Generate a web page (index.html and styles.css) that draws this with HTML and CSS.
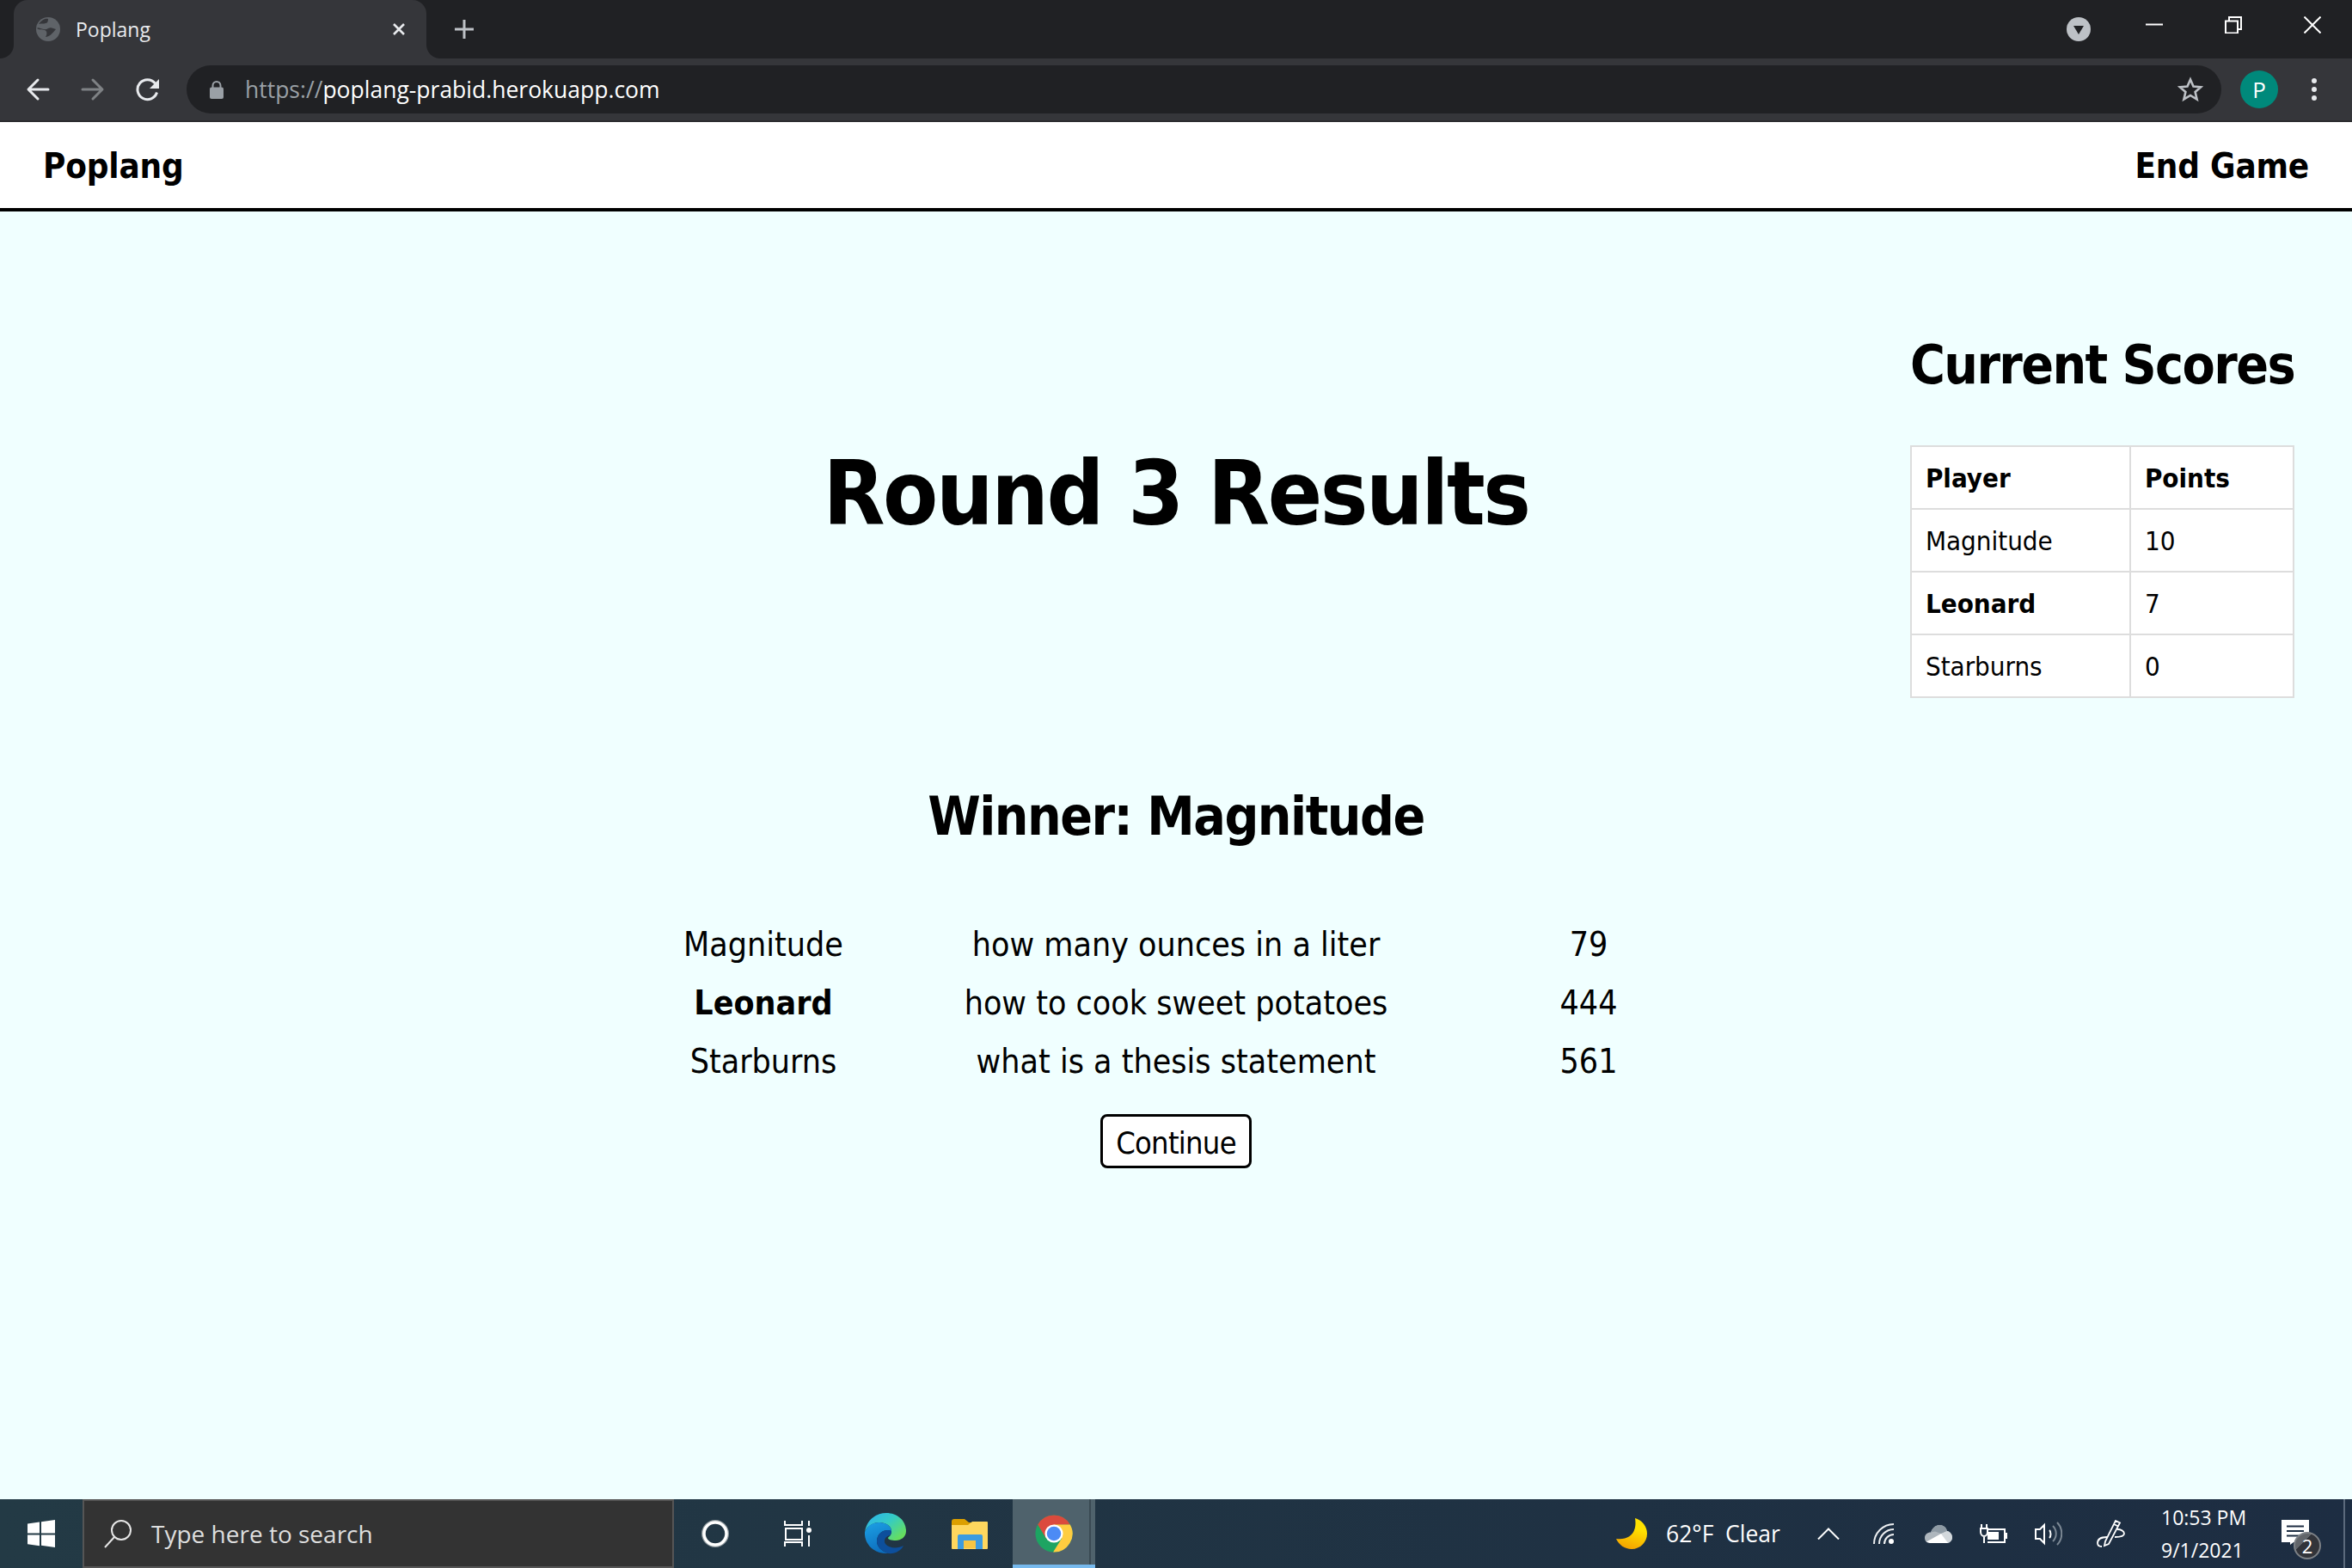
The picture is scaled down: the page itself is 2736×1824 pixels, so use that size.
FILE: index.html
```html
<!DOCTYPE html>
<html lang="en">
<head>
<meta charset="utf-8">
<title>Poplang</title>
<link rel="stylesheet" href="styles.css">
</head>
<body>
<div class="window">
  <div class="tabstrip">
    <div class="tab">
      <svg class="favicon" viewBox="0 0 28 28"><circle cx="14" cy="14" r="14" fill="#5f6368"/><path d="M3 8c3-1 6 0 8-1 2 0 3-2 3-5-4-1-8 2-11 6zM1 13c2 2 6 1 9 2 3 1 3 5 1 8 4 0 8-4 12-9-3-1-6-3-9-1-3 2-6 1-9 0-2-1-3-1-4 0z" fill="#35363a"/></svg>
      <span class="tab-title">Poplang</span>
      <svg class="tab-close" viewBox="0 0 16 16"><path d="M2 2l12 12M14 2L2 14" stroke="#e8eaed" stroke-width="2.600" fill="none"/></svg>
    </div>
    <svg class="newtab" viewBox="0 0 24 24"><path d="M12 1v22M1 12h22" stroke="#bdc1c6" stroke-width="3" fill="none"/></svg>
    <svg class="profile-menu" viewBox="0 0 28 28"><circle cx="14" cy="14" r="14" fill="#bdc1c6"/><path d="M8 10h12l-6 10z" fill="#202124"/></svg>
    <div class="winbtn"><svg viewBox="0 0 20 20"><path d="M0 9.500h20" stroke="#fff" stroke-width="2" fill="none"/></svg></div>
    <div class="winbtn"><svg viewBox="0 0 20 20"><path d="M1 5.500h14v14H1zM5 5V1h14v14h-4" stroke="#fff" stroke-width="2" fill="none"/></svg></div>
    <div class="winbtn"><svg viewBox="0 0 20 20"><path d="M.5.5l19 19M19.500.5l-19 19" stroke="#fff" stroke-width="2" fill="none"/></svg></div>
  </div>
  <div class="toolbar">
    <div class="toolbtn"><svg viewBox="0 0 28 28"><path d="M26 14H4M14 3L3 14l11 11" stroke="#e8eaed" stroke-width="3" stroke-linecap="round" stroke-linejoin="round" fill="none"/></svg></div>
    <div class="toolbtn"><svg viewBox="0 0 28 28"><path d="M2 14h22M14 3l11 11-11 11" stroke="#7f8285" stroke-width="3" stroke-linecap="round" stroke-linejoin="round" fill="none"/></svg></div>
    <div class="toolbtn"><svg viewBox="0 0 28 28"><path d="M24.500 17.500a11.500 11.500 0 1 1-2-10.500" stroke="#e8eaed" stroke-width="3" fill="none"/><path d="M27 2v11H16z" fill="#e8eaed"/></svg></div>
    <div class="omnibox">
      <svg class="lock" viewBox="0 0 16 21"><path d="M3.500 9V5.500a4.500 4.500 0 0 1 9 0V9" stroke="#9aa0a6" stroke-width="2" fill="none"/><rect y="7.500" width="16" height="13.500" rx="2" fill="#9aa0a6"/></svg>
      <span class="url"><span class="url-scheme">https://</span>poplang-prabid.herokuapp.com</span>
      <svg class="star" viewBox="0 0 30 30"><path d="M15 3.500l3.500 8 8.700.800-6.600 5.700 2 8.500-7.600-4.500-7.600 4.500 2-8.500-6.600-5.700 8.700-.8z" stroke="#bdc1c6" stroke-width="2.600" fill="none"/></svg>
    </div>
    <div class="avatar">P</div>
    <div class="dots"><i></i><i></i><i></i></div>
  </div>
  <nav class="sitenav">
    <span class="brand">Poplang</span>
    <span class="brand">End Game</span>
  </nav>
  <main class="page">
    <div class="center">
      <h1 class="round-title">Round 3 Results</h1>
      <h2 class="winner">Winner: Magnitude</h2>
      <div class="results">
        <div>Magnitude</div><div>how many ounces in a liter</div><div>79</div>
        <div class="me">Leonard</div><div>how to cook sweet potatoes</div><div>444</div>
        <div>Starburns</div><div>what is a thesis statement</div><div>561</div>
      </div>
      <button class="continue" type="button">Continue</button>
    </div>
    <aside class="scores">
      <h2 class="scores-title">Current Scores</h2>
      <table class="score-table">
        <tr><th>Player</th><th>Points</th></tr>
        <tr><td>Magnitude</td><td>10</td></tr>
        <tr><td class="me">Leonard</td><td>7</td></tr>
        <tr><td>Starburns</td><td>0</td></tr>
      </table>
    </aside>
  </main>
  <footer class="taskbar">
    <div class="start"><svg viewBox="0 0 32 32"><path d="M0 4.500l14-2v13H0zM16 2.200L32 0v15.500H16zM0 17.500h14v12.800l-14-2zM16 17.500h16V32l-16-2.200z" fill="#fff"/></svg></div>
    <div class="search">
      <svg class="glass" viewBox="0 0 34 34"><circle cx="21" cy="13" r="11" stroke="#e6e6e6" stroke-width="2" fill="none"/><path d="M13 21L2 33" stroke="#e6e6e6" stroke-width="2" fill="none"/></svg>
      <span class="search-text">Type here to search</span>
    </div>
    <div class="tb-btn"><svg class="ic32" viewBox="0 0 32 32"><circle cx="16" cy="16" r="15" stroke="#8d979c" stroke-width="2" fill="none"/><circle cx="16" cy="16" r="13" stroke="#fff" stroke-width="3.500" fill="none"/></svg></div>
    <div class="tb-btn"><svg class="ic32" viewBox="0 0 32 32"><path d="M1 1v5h20V1M1 31v-5h20v5M29 1v6M29 18v13" stroke="#fff" stroke-width="2" fill="none"/><rect x="2" y="10" width="19" height="13" stroke="#fff" stroke-width="2" fill="none"/><circle cx="29" cy="12" r="3" fill="#fff"/></svg></div>
    <div class="tb-btn wide">
      <svg class="ic48" viewBox="0 0 48 48">
        <defs>
          <linearGradient id="edgeA" x1="0.100" y1="0" x2="1" y2="0.700"><stop offset="0" stop-color="#2cb4ec"/><stop offset="0.500" stop-color="#35cbc4"/><stop offset="1" stop-color="#66de5e"/></linearGradient>
          <linearGradient id="edgeB" x1="0.300" y1="0" x2="0.600" y2="1"><stop offset="0" stop-color="#1b9de2"/><stop offset="1" stop-color="#0c6cbc"/></linearGradient>
        </defs>
        <path d="M0 22C2 9 12 0 25 0c13 0 23 9 23 21 0 7-6 11-12 11-5 0-9-1-9-3 0-1 4-2 4-8 0-6-7-10-14-10C9 11 2 16 0 22z" fill="url(#edgeA)"/>
        <path d="M0 22c3-7 9-11 17-11 7 0 14 4 14 10-6-3-17 1-17 12 0 6 5 11 13 14C12 48-1 37 0 22z" fill="url(#edgeB)"/>
        <path d="M31 21c-6-3-17 1-17 12 0 6 5 11 13 14 8 1 15-3 18-9-7 4-17 3-21-2-3-5 1-9 5-10 1-1 2-2 2-5z" fill="#0d4f9c"/>
      </svg>
    </div>
    <div class="tb-btn mid">
      <svg class="ic42" viewBox="0 0 42 35"><path d="M0 3a3 3 0 0 1 3-3h12l5 4h21a1 1 0 0 1 1 1v4H0z" fill="#dc9f00"/><path d="M0 7h19l5-4h17a1 1 0 0 1 1 1v30a1 1 0 0 1-1 1H1a1 1 0 0 1-1-1z" fill="#ffd75e"/><path d="M7 35V20a2 2 0 0 1 2-2h25a2 2 0 0 1 2 2v15h-8v-10H14v10z" fill="#3d9be0"/><rect x="14" y="25" width="14" height="9" fill="#f6c544"/></svg>
    </div>
    <div class="tb-btn active">
      <svg class="ic44" viewBox="0 0 48 48"><circle cx="24" cy="24" r="23.500" fill="#1da462"/><path d="M44.500 12.500A23.500 23.500 0 0 0 3.500 12.500L14 30l10-17z" fill="#db4a3d"/><path d="M44.500 12.500H24l10 17.500L23 47.500A23.500 23.500 0 0 0 44.500 12.500z" fill="#ffcd40"/><circle cx="24" cy="24" r="11.500" fill="#fff"/><circle cx="24" cy="24" r="9" fill="#4c8bf5"/></svg>
    </div>
    <div class="tray">
      <svg class="moon" viewBox="0 0 36 36"><defs><linearGradient id="moonG" x1="0.500" y1="0.300" x2="0.300" y2="1"><stop offset="0" stop-color="#ffe100"/><stop offset="1" stop-color="#f4a000"/></linearGradient></defs><path d="M22 0c9 3 14 10 14 18 0 10-8 18-18 18-8 0-15-5-18-12 14 2 25-6 22-24z" fill="url(#moonG)"/></svg>
      <span class="weather">62°F&nbsp; Clear</span>
      <div class="slot first"><svg class="ic-chev" viewBox="0 0 26 14"><path d="M1 13.500L13 1.500l12 12" stroke="#fff" stroke-width="2" fill="none"/></svg></div>
      <div class="slot"><svg class="ic-wifi" viewBox="0 0 24 24"><path d="M1 24A23 23 0 0 1 24 1M7 24A17 17 0 0 1 24 7M13 24A11 11 0 0 1 24 13" stroke="#eef0f2" stroke-width="2" fill="none"/><circle cx="21" cy="21" r="3" fill="#fff"/></svg></div>
      <div class="slot"><svg class="ic-cloud" viewBox="0 0 32 21"><path d="M6 21C2 21 0 18 0 15c0-4 3-6.500 7-6.500C9 3 13 0 17 0c5 0 8 3 9 7 3 .5 6 3.500 6 7.500 0 3.500-3 6.500-6 6.500z" fill="#aeb6bd"/><path d="M7 8.500C9 3 13 0 17 0c5 0 8 3 9 7l-7 3-7-2.500z" fill="#8e9aa4"/><path d="M19 10l7-3c3 .5 6 3.500 6 7.500 0 3.500-3 6.500-6 6.500z" fill="#d3d8dc"/><path d="M2 19.500L19 10l8 11H6z" fill="#fff"/></svg></div>
      <div class="slot"><svg class="ic-batt" viewBox="0 0 32 22"><path d="M2 0v5M8 0v5M0 5h10M1 5v4c0 3 2 5 4 5s4-2 4-5V5M5 14v8" stroke="#fff" stroke-width="2" fill="none"/><path d="M10 6h19v15H9" stroke="#fff" stroke-width="2" fill="none"/><rect x="9" y="9" width="13" height="9" fill="#fff"/><rect x="30" y="10" width="2" height="7" fill="#fff"/></svg></div>
      <div class="slot"><svg class="ic-vol" viewBox="0 0 32 28"><path d="M1 9h5l5-5v21l-5-5H1z" stroke="#fff" stroke-width="2" fill="none"/><path d="M17 10c2 2 2 7 0 9" stroke="#fff" stroke-width="2" fill="none"/><path d="M21 5c5 5 5 13 0 18M26 1c7 7 7 19 0 26" stroke="#7c8894" stroke-width="2" fill="none"/></svg></div>
      <div class="slot pen"><svg class="ic-pen" viewBox="0 0 33 32"><path d="M22 1l5 2.500L14 28l-5 2 1-5zM20 5l5 2.500" stroke="#fff" stroke-width="1.800" fill="none"/><path d="M12 20C6 20 1 22 1 27c0 3 2 4 5 4M24 11c4 0 8 2 8 5s-5 4-11 4" stroke="#fff" stroke-width="1.800" fill="none"/></svg></div>
      <div class="clock"><span>10:53 PM</span><span>9/1/2021</span></div>
      <div class="notify">
        <svg class="note" viewBox="0 0 32 29"><path d="M0 0h32v26H14l-4 3v-3H0z" fill="#fff"/><path d="M6 7.500h20M6 13h20M6 18.500h20" stroke="#1d2d42" stroke-width="2"/></svg>
        <span class="badge">2</span>
      </div>
      <div class="desk"></div>
    </div>
  </footer>
</div>
</body>
</html>
```
FILE: styles.css
```css
* { box-sizing: border-box; }
html, body { margin: 0; height: 100%; overflow: hidden; }
.window { width: 2736px; height: 1824px; display: flex; flex-direction: column; overflow: hidden; font-family: "DejaVu Sans Condensed", "DejaVu Sans", sans-serif; color: #000; }

.tabstrip { height: 68px; flex: none; background: #202124; display: flex; align-items: center; padding-left: 16px; }
.tab { position: relative; width: 480px; height: 68px; background: #35363a; border-radius: 16px 16px 0 0; display: flex; align-items: center; padding: 0 24px 0 26px; color: #e8eaed; font: 23px "Open Sans", sans-serif; }
.tab::before, .tab::after { content: ""; position: absolute; bottom: 0; width: 16px; height: 16px; }
.tab::before { left: -16px; background: radial-gradient(circle at 0 0, #202124 15.500px, #35363a 16.500px); }
.tab::after { right: -16px; background: radial-gradient(circle at 100% 0, #202124 15.500px, #35363a 16.500px); }
.favicon { width: 28px; height: 28px; flex: none; }
.tab-title { margin-left: 18px; flex: 1; }
.tab-close { width: 16px; height: 16px; }
.newtab { width: 24px; height: 24px; margin-left: 32px; }
.profile-menu { width: 28px; height: 28px; margin-left: auto; margin-right: 28px; }
.winbtn { width: 92px; height: 68px; display: flex; justify-content: center; padding-top: 19px; }
.winbtn svg { width: 20px; height: 20px; }

.toolbar { height: 74px; flex: none; background: #35363a; border-bottom: 2px solid #2b2c2f; display: flex; align-items: center; padding-left: 12px; }
.toolbtn { width: 64px; display: flex; justify-content: center; }
.toolbtn svg { width: 28px; height: 28px; }
.omnibox { flex: 1; height: 56px; margin-left: 13px; background: #202124; border-radius: 28px; display: flex; align-items: center; padding: 0 21px 0 27px; color: #fff; font: 26.500px "Open Sans", sans-serif; }
.lock { width: 16px; height: 21px; flex: none; }
.url { margin-left: 25px; flex: 1; }
.url-scheme { color: #9aa0a6; }
.star { width: 30px; height: 30px; }
.avatar { width: 44px; height: 44px; margin-left: 22px; border-radius: 50%; background: #00897b; color: #fff; font: 26px "Open Sans", sans-serif; display: flex; align-items: center; justify-content: center; }
.dots { width: 64px; margin-left: 10px; margin-right: 12px; display: flex; flex-direction: column; align-items: center; gap: 4px; }
.dots i { width: 6px; height: 6px; border-radius: 50%; background: #e8eaed; }

.sitenav { height: 104px; flex: none; background: #fff; border-bottom: 4px solid #000; display: flex; justify-content: space-between; align-items: center; padding: 2px 50px 0; }
.brand { font-size: 40px; font-weight: 700; letter-spacing: -0.200px; }

.page { flex: 1; background: #f0ffff; display: grid; grid-template-columns: 1fr auto 1fr; }
.center { grid-column: 2; display: flex; flex-direction: column; align-items: center; }
.round-title { margin: 263px 0 0; font-size: 104px; line-height: 130px; font-weight: 700; letter-spacing: -2.400px; }
.winner { margin: 272px 0 0; font-size: 62px; line-height: 78px; font-weight: 700; letter-spacing: -1.500px; }
.results { margin-top: 75px; display: grid; grid-template-columns: 280px 680px 280px; grid-auto-rows: 68px; align-items: center; text-align: center; font-size: 39px; }
.me { font-weight: 700; }
.continue { margin-top: 28px; width: 176px; height: 63px; border: 3px solid #000; border-radius: 8px; background: #fff; color: #000; font: 36px "DejaVu Sans Condensed", "DejaVu Sans", sans-serif; letter-spacing: -0.750px; padding: 3px 0 0; }

.scores { grid-column: 3; justify-self: end; padding: 145px 67px 0 0; }
.scores-title { margin: 0; font-size: 62px; line-height: 68px; font-weight: 700; white-space: nowrap; letter-spacing: -1.600px; }
.score-table { margin-top: 59px; width: 447px; border-collapse: collapse; background: #fff; font-size: 31px; }
.score-table th, .score-table td { height: 73px; border: 2px solid #ddd; padding: 0 16px; text-align: left; }
.score-table th:first-child, .score-table td:first-child { width: 255px; }

.taskbar { height: 80px; flex: none; background: linear-gradient(90deg, #233a45, #1d2d42); display: flex; align-items: stretch; font-family: "Open Sans", sans-serif; color: #fff; }
.start { width: 96px; display: flex; align-items: center; justify-content: center; }
.start svg { width: 32px; height: 32px; }
.search { width: 688px; background: #333; border: 2px solid #555; display: flex; align-items: center; padding-left: 22px; font-size: 28px; color: #dedede; }
.glass { width: 34px; height: 34px; }
.search-text { margin-left: 22px; }
.tb-btn { width: 96px; display: flex; align-items: center; justify-content: center; }
.tb-btn.wide { width: 108px; }
.tb-btn.mid { width: 94px; padding-right: 6px; }
.tb-btn.active { background: #4f626c; border-bottom: 4px solid #76b9ed; box-shadow: inset -5px 0 0 #4f626c, inset -7px 0 0 #3a4a53; padding-top: 4px; }
.ic32 { width: 32px; height: 32px; }
.ic48 { width: 48px; height: 48px; }
.ic42 { width: 42px; height: 35px; }
.ic44 { width: 44px; height: 44px; }
.tray { margin-left: auto; display: flex; align-items: center; }
.moon { width: 36px; height: 36px; }
.weather { margin-left: 22px; width: 157px; font-size: 26.500px; white-space: nowrap; }
.slot { width: 64px; display: flex; justify-content: center; }
.slot.pen { width: 80px; }
.ic-chev { width: 26px; height: 14px; }
.ic-wifi { width: 24px; height: 24px; }
.ic-cloud { width: 32px; height: 21px; }
.ic-batt { width: 32px; height: 22px; }
.ic-vol { width: 32px; height: 28px; }
.ic-pen { width: 33px; height: 32px; }
.clock { width: 135px; padding-left: 19px; display: flex; flex-direction: column; gap: 10px; font-size: 23px; line-height: 28px; white-space: nowrap; }
.notify { position: relative; width: 96px; height: 80px; }
.note { position: absolute; left: 24px; top: 24px; width: 32px; height: 29px; }
.badge { position: absolute; left: 38px; top: 38px; width: 32px; height: 32px; border-radius: 50%; background: linear-gradient(135deg, #62656a 35%, #32343a 35%); border: 2px solid #7d8186; color: #fff; font-size: 22px; line-height: 28px; text-align: center; }
.desk { width: 10px; height: 80px; border-left: 2px solid #5c6a7c; }
```
